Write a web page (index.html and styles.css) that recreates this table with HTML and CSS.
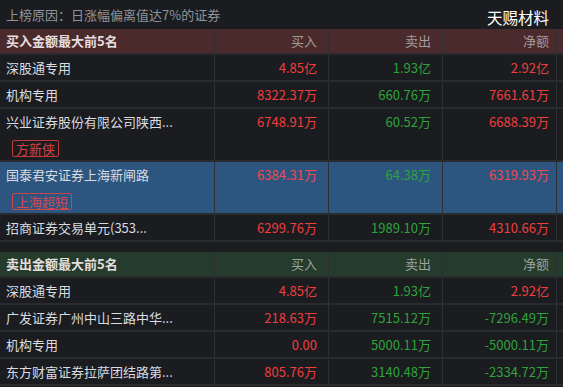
FILE: index.html
```html
<!DOCTYPE html>
<html lang="zh">
<head>
<meta charset="utf-8">
<link rel="stylesheet" href="styles.css">
</head>
<body>
<div class="page">
  <div class="titlebar">
    <span class="reason">上榜原因：日涨幅偏离值达7%的证券</span>
    <span class="stock">天赐材料</span>
  </div>

  <div class="table">
    <div class="row head buyhead">
      <div class="c name">买入金额最大前5名</div>
      <div class="c num">买入</div>
      <div class="c num">卖出</div>
      <div class="c num last">净额</div>
      <div class="c extra"></div>
    </div>
    <div class="row">
      <div class="c name">深股通专用</div>
      <div class="c num red">4.85亿</div>
      <div class="c num green">1.93亿</div>
      <div class="c num last red">2.92亿</div>
      <div class="c extra"></div>
    </div>
    <div class="row">
      <div class="c name">机构专用</div>
      <div class="c num red">8322.37万</div>
      <div class="c num green">660.76万</div>
      <div class="c num last red">7661.61万</div>
      <div class="c extra"></div>
    </div>
    <div class="row tall">
      <div class="c name"><span class="nm">兴业证券股份有限公司陕西...</span><span class="tag">方新侠</span></div>
      <div class="c num red">6748.91万</div>
      <div class="c num green">60.52万</div>
      <div class="c num last red">6688.39万</div>
      <div class="c extra"></div>
    </div>
    <div class="row tall hl">
      <div class="c name"><span class="nm">国泰君安证券上海新闸路</span><span class="tag">上海超短</span></div>
      <div class="c num red">6384.31万</div>
      <div class="c num green">64.38万</div>
      <div class="c num last red">6319.93万</div>
      <div class="c extra"></div>
    </div>
    <div class="row">
      <div class="c name">招商证券交易单元(353...</div>
      <div class="c num red">6299.76万</div>
      <div class="c num green">1989.10万</div>
      <div class="c num last red">4310.66万</div>
      <div class="c extra"></div>
    </div>
  </div>

  <div class="table sell">
    <div class="row head sellhead">
      <div class="c name">卖出金额最大前5名</div>
      <div class="c num">买入</div>
      <div class="c num">卖出</div>
      <div class="c num last">净额</div>
      <div class="c extra"></div>
    </div>
    <div class="row">
      <div class="c name">深股通专用</div>
      <div class="c num red">4.85亿</div>
      <div class="c num green">1.93亿</div>
      <div class="c num last red">2.92亿</div>
      <div class="c extra"></div>
    </div>
    <div class="row">
      <div class="c name">广发证券广州中山三路中华...</div>
      <div class="c num red">218.63万</div>
      <div class="c num green">7515.12万</div>
      <div class="c num last green">-7296.49万</div>
      <div class="c extra"></div>
    </div>
    <div class="row">
      <div class="c name">机构专用</div>
      <div class="c num red">0.00</div>
      <div class="c num green">5000.11万</div>
      <div class="c num last green">-5000.11万</div>
      <div class="c extra"></div>
    </div>
    <div class="row">
      <div class="c name">东方财富证券拉萨团结路第...</div>
      <div class="c num red">805.76万</div>
      <div class="c num green">3140.48万</div>
      <div class="c num last green">-2334.72万</div>
      <div class="c extra"></div>
    </div>
  </div>
</div>
</body>
</html>
```

FILE: styles.css
```css
html, body {
  margin: 0;
  padding: 0;
  background: #1b1c20;
  overflow: hidden;
}
body {
  font-family: "Noto Sans CJK SC", "Noto Sans", sans-serif;
  font-size: 13px;
  color: #d9dce0;
}
.page {
  width: 563px;
  height: 387px;
  overflow: hidden;
}
.titlebar {
  height: 29px;
  display: flex;
  align-items: center;
  justify-content: space-between;
  padding: 0 14px 0 6px;
}
.reason {
  color: #8d949c;
  font-size: 13px;
}
.stock {
  color: #ffffff;
  font-size: 15.5px;
  padding-top: 4px;
}
.table.sell {
  margin-top: 10px;
}
.row {
  display: grid;
  grid-template-columns: 215px 114px 114px 114px 1fr;
  height: 25px;
  border-bottom: 2px solid #2a2b2f;
}
.row.head {
  height: 24px;
}
.row.tall {
  height: 51px;
}
.row.hl {
  background: #2c5580;
}
.buyhead {
  background: #4b2a2c;
}
.sellhead {
  background: #253b2b;
}
.c {
  border-right: 1px solid #2f3034;
  line-height: 25px;
  white-space: nowrap;
  overflow: hidden;
}
.head .c {
  line-height: 24px;
}
.c.extra {
  border-right: none;
}
.name {
  padding-left: 6px;
  display: flex;
  flex-direction: column;
  align-items: flex-start;
}
.head .name {
  font-weight: bold;
  color: #e6dede;
}
.head .num {
  color: #a29c9c;
}
.sellhead .num {
  color: #9ca39d;
}
.num {
  text-align: right;
  padding-right: 11px;
}
.num.last {
  padding-right: 7px;
}
.red {
  color: #f23d3d;
}
.green {
  color: #2ea33a;
}
.hl .red {
  color: #f04a4f;
}
.hl .green {
  color: #2fa43a;
}
.tag {
  margin-top: 6px;
  margin-left: 6px;
  border: 1px solid #c2393b;
  border-radius: 2px;
  color: #d8403f;
  line-height: 15px;
  padding: 0 3px;
  font-size: 13px;
}
.hl .tag {
  border-color: #c9454a;
  color: #d9474d;
}
```
